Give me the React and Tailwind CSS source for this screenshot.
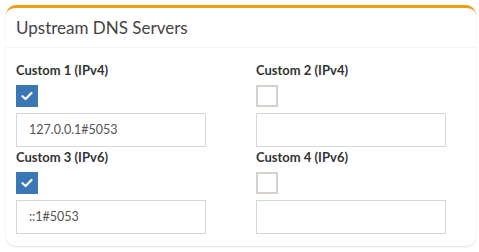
export default function App() {
  const Check = ({ checked }) =>
    checked ? (
      <div className="w-[22px] h-[22px] bg-[#3a78b5] flex items-center justify-center">
        <svg width="12" height="10" viewBox="0 0 12 10" fill="none">
          <path d="M1.5 5.2 L4.6 8 L10.5 2" stroke="white" strokeWidth="2.2" strokeLinecap="round" strokeLinejoin="round" />
        </svg>
      </div>
    ) : (
      <div className="w-[22px] h-[22px] border-2 border-[#d6d2cb] bg-white" />
    );

  const Field = ({ label, checked, value }) => (
    <div className="flex flex-col">
      <div className="text-[13px] font-bold text-[#333] leading-[20px] h-[20px]">{label}</div>
      <div className="mt-[5px]">
        <Check checked={checked} />
      </div>
      <div className="mt-[6px] w-[190px] h-[34px] border border-[#d2d6de] flex items-center pl-[12px] text-[12.5px] text-[#555]">
        {value}
      </div>
    </div>
  );

  return (
    <div className="w-[479px] h-[252px] bg-white pt-[5px] px-[6px]" style={{ fontFamily: "Lato, 'Noto Sans', sans-serif" }}>
      <div className="w-[470px] h-[241px] rounded-[10px] border-t-[3px] border-[#f39c12] bg-white shadow-[0_1px_2px_rgba(0,0,0,0.12)]">
        <div className="h-[40px] border-b border-[#f2f2f2] flex items-center pl-[10px] text-[17px] text-[#444]">
          Upstream DNS Servers
        </div>
        <div className="pl-[10px] pt-[12px] grid grid-cols-[240px_1fr]">
          <Field label="Custom 1 (IPv4)" checked value="127.0.0.1#5053" />
          <Field label="Custom 2 (IPv4)" value="" />
          <Field label="Custom 3 (IPv6)" checked value="::1#5053" />
          <Field label="Custom 4 (IPv6)" value="" />
        </div>
      </div>
    </div>
  );
}
